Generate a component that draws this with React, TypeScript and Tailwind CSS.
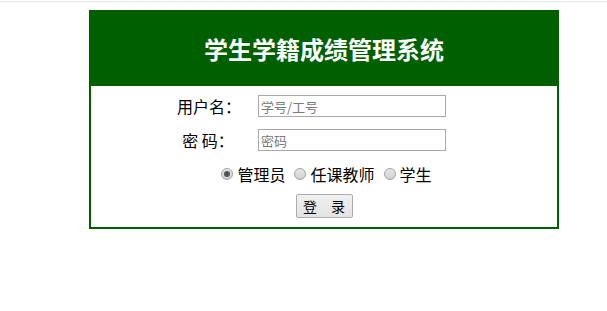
import React, { useState } from "react";

const font = { fontFamily: '"Microsoft YaHei", "Noto Sans CJK SC", "Liberation Sans", sans-serif' };

function Radio({ checked, label, onClick }: { checked: boolean; label: string; onClick: () => void }) {
  return (
    <label className="flex items-center cursor-pointer" onClick={onClick}>
      <span className="w-[12px] h-[12px] rounded-full border border-[#a3a3a3] bg-gradient-to-b from-[#e6e6e6] to-[#d2d2d2] flex items-center justify-center mr-[4px]">
        {checked && <span className="w-[6px] h-[6px] rounded-full bg-[#555555]" />}
      </span>
      <span className="text-[16px] text-black leading-none">{label}</span>
    </label>
  );
}

export default function App() {
  const [role, setRole] = useState(0);
  return (
    <div className="w-[607px] h-[311px] bg-white" style={font}>
      <div className="h-[1px]" />
      <div className="h-[1px] bg-[#e6e6e6]" />
      <div className="ml-[89px] mt-[8px] w-[470px] h-[219px] border-2 border-[#006000] flex flex-col">
        <div className="h-[74px] bg-[#006000] flex items-center justify-center">
          <h1 className="text-[24px] font-bold text-white leading-none">学生学籍成绩管理系统</h1>
        </div>
        <div className="flex flex-col items-center pt-[9px]">
          <div className="flex items-center w-full h-[22px]">
            <span className="w-[150px] text-right text-[16px] text-black">用户名：</span>
            <input
              className="ml-[17px] w-[188px] h-[22px] border border-[#a9a9a9] px-[2px] text-[13px] outline-none placeholder:text-[#7a7a7a]"
              placeholder="学号/工号"
            />
          </div>
          <div className="flex items-center w-full h-[22px] mt-[12px]">
            <span className="w-[150px] text-right text-[16px] text-black whitespace-pre">{"密 码：  "}</span>
            <input
              type="password"
              className="ml-[17px] w-[188px] h-[22px] border border-[#a9a9a9] px-[2px] text-[13px] outline-none placeholder:text-[#7a7a7a]"
              placeholder="密码"
            />
          </div>
          <div className="flex items-center gap-[9px] mt-[15px] ml-[5px] h-[16px]">
            <Radio checked={role === 0} label="管理员" onClick={() => setRole(0)} />
            <Radio checked={role === 1} label="任课教师" onClick={() => setRole(1)} />
            <Radio checked={role === 2} label="学生" onClick={() => setRole(2)} />
          </div>
          <button className="mt-[12px] w-[57px] h-[24px] border border-[#acacac] rounded-[2px] bg-gradient-to-b from-[#f0f0f0] to-[#e3e3e3] text-[14px] text-black whitespace-pre leading-none">
            {"登　录"}
          </button>
        </div>
      </div>
    </div>
  );
}
